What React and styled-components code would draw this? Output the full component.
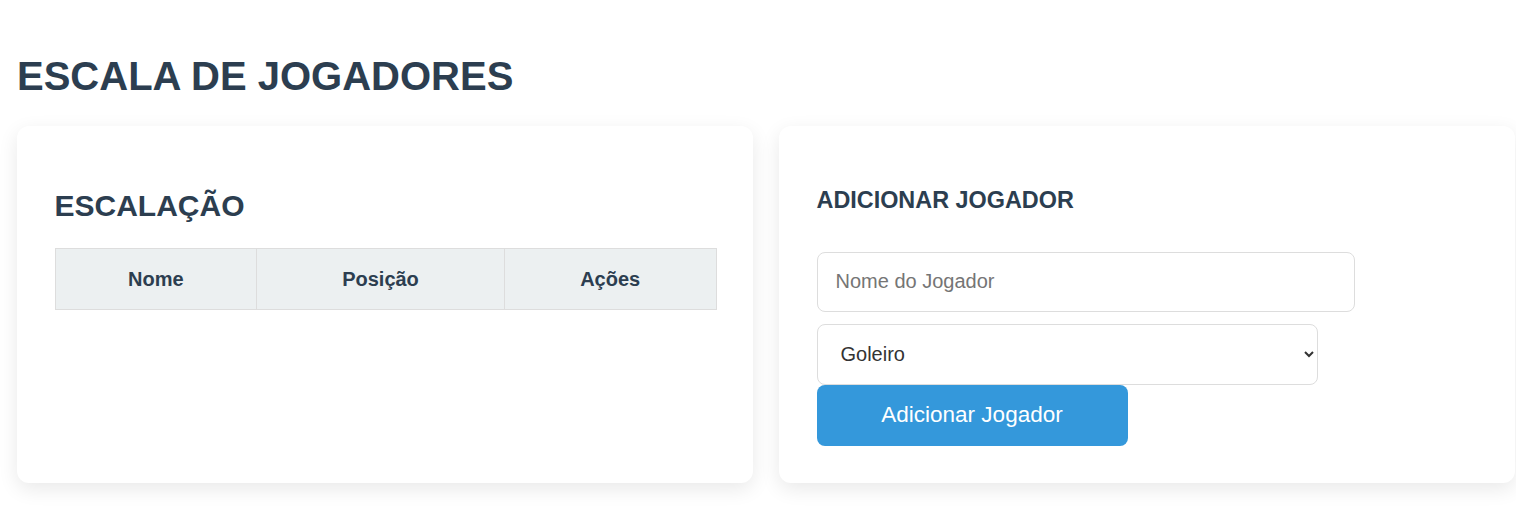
import React from 'react';
import styled, { createGlobalStyle } from 'styled-components';

const GlobalStyle = createGlobalStyle`
  * { box-sizing: border-box; }
  body {
    margin: 0;
    background: #ffffff;
    font-family: "Liberation Sans", Arial, sans-serif;
    color: #2c3e50;
  }
`;

const Page = styled.div`
  padding: 54px 0 40px 17px;
`;

const Title = styled.h1`
  margin: 0 0 27px;
  font-size: 40px;
  font-weight: 700;
  color: #2c3e50;
`;

const Columns = styled.div`
  display: grid;
  grid-template-columns: 736px 736px;
  column-gap: 26px;
  align-items: stretch;
`;

const Card = styled.section`
  background: #ffffff;
  border-radius: 12px;
  box-shadow: 0 6px 20px rgba(0, 0, 0, 0.09);
  padding: 37.5px;
`;

const SectionTitle = styled.h2`
  margin: 25px 0;
  font-size: 30px;
  font-weight: 700;
  color: #2c3e50;
`;

const FormTitle = styled.h3`
  margin: 23px 0 38px;
  font-size: 23.4px;
  font-weight: 700;
  color: #2c3e50;
`;

const Table = styled.table`
  width: 662px;
  border-collapse: collapse;
`;

const HeadCell = styled.th`
  width: ${(p) => p.$w}px;
  background: #ecf0f1;
  border: 1px solid #dddddd;
  padding: 18px 12px;
  font-size: 20px;
  line-height: 24px;
  font-weight: 700;
  color: #2c3e50;
  text-align: center;
`;

const Form = styled.form`
  display: flex;
  flex-direction: column;
  align-items: flex-start;
`;

const TextInput = styled.input`
  width: 538px;
  height: 60px;
  padding: 0 18px;
  border: 1px solid #dddddd;
  border-radius: 8px;
  font-family: "Liberation Sans", Arial, sans-serif;
  font-size: 20px;
  color: #333333;
  outline: none;
  &::placeholder { color: #757575; }
`;

const Select = styled.select`
  width: 501px;
  height: 61px;
  margin-top: 12px;
  padding: 0 19px;
  border: 1px solid #dddddd;
  border-radius: 8px;
  background: #ffffff;
  font-family: "Liberation Sans", Arial, sans-serif;
  font-size: 20px;
  color: #333333;
  outline: none;
`;

const AddButton = styled.button`
  width: 311px;
  height: 61px;
  border: none;
  border-radius: 8px;
  background: #3498db;
  color: #ffffff;
  font-family: "Liberation Sans", Arial, sans-serif;
  font-size: 22.5px;
  cursor: pointer;
`;

const App = () => {
  return (
    <>
      <GlobalStyle />
      <Page>
        <Title>ESCALA DE JOGADORES</Title>
        <Columns>
          <Card>
            <SectionTitle>ESCALAÇÃO</SectionTitle>
            <Table>
              <thead>
                <tr>
                  <HeadCell $w={202}>Nome</HeadCell>
                  <HeadCell $w={248}>Posição</HeadCell>
                  <HeadCell $w={212}>Ações</HeadCell>
                </tr>
              </thead>
              <tbody></tbody>
            </Table>
          </Card>
          <Card>
            <FormTitle>ADICIONAR JOGADOR</FormTitle>
            <Form onSubmit={(e) => e.preventDefault()}>
              <TextInput type="text" placeholder="Nome do Jogador" />
              <Select defaultValue="Goleiro">
                <option>Goleiro</option>
                <option>Zagueiro</option>
                <option>Lateral</option>
                <option>Meio-campo</option>
                <option>Atacante</option>
              </Select>
              <AddButton type="submit">Adicionar Jogador</AddButton>
            </Form>
          </Card>
        </Columns>
      </Page>
    </>
  );
};

export default App;
